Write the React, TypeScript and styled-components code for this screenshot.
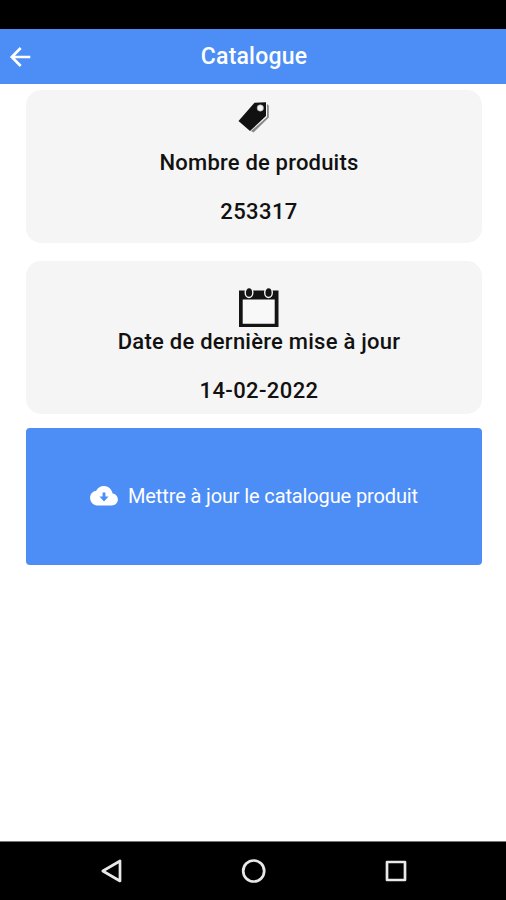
import React from 'react';
import styled, { createGlobalStyle } from 'styled-components';

const GlobalStyle = createGlobalStyle`
  * { box-sizing: border-box; }
  body { margin: 0; background: #fff; }
  button { font: inherit; border: 0; padding: 0; background: none; cursor: pointer; }
  svg { display: block; flex: none; }
`;

const Screen = styled.div`
  display: flex;
  flex-direction: column;
  width: 506px;
  height: 900px;
  overflow: hidden;
  background: #fff;
  font-family: Roboto, 'Liberation Sans', sans-serif;
`;

const StatusBar = styled.div`
  flex: none;
  height: 29px;
  background: #000;
`;

const Header = styled.header`
  flex: none;
  display: grid;
  grid-template-columns: 40px 1fr 40px;
  align-items: center;
  height: 55px;
  background: #4c8df6;
  color: #fff;
`;

const BackButton = styled.button`
  padding-left: 8px;
  color: #fff;
`;

const Title = styled.h1`
  margin: 0 0 0 2px;
  font-size: 23px;
  line-height: 28px;
  font-weight: 500;
  letter-spacing: 0.2px;
  text-align: center;
`;

const Content = styled.main`
  flex: 1;
  display: flex;
  flex-direction: column;
  padding: 6px 24px 0 26px;
`;

const Card = styled.section<{ $top: number; $gap: number }>`
  display: flex;
  flex-direction: column;
  align-items: center;
  height: 153px;
  margin-bottom: ${(p) => p.$gap}px;
  padding: ${(p) => p.$top}px 0 0 10px;
  border-radius: 15px;
  background: #f5f5f5;
  color: #111;
`;

const CardIcon = styled.div<{ $shift?: number }>`
  margin-right: ${(p) => p.$shift ?? 0}px;
`;

const CardLine = styled.p<{ $top: number; $spacing: number }>`
  margin: ${(p) => p.$top}px 0 0;
  font-size: 22px;
  line-height: 26px;
  font-weight: 500;
  letter-spacing: ${(p) => p.$spacing}px;
  white-space: nowrap;
`;

const UpdateButton = styled.button`
  display: flex;
  align-items: center;
  justify-content: center;
  gap: 10px;
  height: 137px;
  padding-bottom: 2px;
  border-radius: 4px;
  background: #4c8df6;
  color: #fff;
`;

const UpdateLabel = styled.span`
  font-size: 20px;
  line-height: 26px;
  letter-spacing: -0.13px;
  white-space: nowrap;
`;

const NavBar = styled.nav`
  flex: none;
  display: flex;
  justify-content: space-between;
  height: 59px;
  padding: 15px 97px 0 98px;
  border-top: 1px solid #777;
  background: #000;
`;

const BackIcon = () => (
  <svg width="24" height="24" viewBox="0 0 24 24" fill="none" stroke="currentColor" strokeWidth="2.7">
    <path d="M22.3 12H4M12.7 3L3.8 12l8.9 9" />
  </svg>
);

const TagIcon = () => (
  <svg width="32" height="32" viewBox="0 0 32 32">
    <path d="M13 30L29 16V3l1.8 1.6v12L15.5 31.5z" fill="#888" />
    <path d="M.5 20L16.5 1.7 28 1.2V15L12 30z" fill="#111" />
    <circle cx="22.3" cy="7" r="3.2" fill="#f4f4f4" stroke="#999" strokeWidth=".6" />
  </svg>
);

const CalendarIcon = () => (
  <svg width="40" height="40" viewBox="0 0 40 40">
    <path d="M0 3.5H39.5V40H0z" fill="#141414" />
    <path d="M3.7 12.5H35.7V36.7H3.7z" fill="#f8f8f8" />
    <g fill="#141414" stroke="#f5f5f5" strokeWidth="1.4">
      <ellipse cx="10" cy="5.5" rx="3.8" ry="5" />
      <ellipse cx="29.5" cy="5.5" rx="3.8" ry="5" />
    </g>
  </svg>
);

const CloudIcon = () => (
  <svg width="28" height="20" viewBox="0 0 28 20">
    <path
      d="M22.6 7.4C21.8 3.2 18.2 0 14 0 10.6 0 7.6 1.9 6.2 4.8 2.7 5.2.1 8.2.1 11.8c0 4.2 3.1 7.6 7 7.6h14.6c3.4 0 6.2-2.8 6.2-6 0-3.2-2.3-5.8-5.3-6z"
      fill="#fff"
    />
    <path d="M12.6 6.5h2.8v4h3.1L14 15.4l-4.5-4.9h3.1z" fill="#4c8df6" />
  </svg>
);

const NavIcon = ({ children }: { children: React.ReactNode }) => (
  <svg width="26" height="28" viewBox="0 0 26 28" fill="none" stroke="#e8e8e8" strokeWidth="2.7" strokeLinejoin="round">
    {children}
  </svg>
);

export default function App() {
  return (
    <Screen>
      <GlobalStyle />
      <StatusBar />
      <Header>
        <BackButton aria-label="Retour">
          <BackIcon />
        </BackButton>
        <Title>Catalogue</Title>
      </Header>
      <Content>
        <Card $top={11} $gap={18}>
          <CardIcon $shift={10}>
            <TagIcon />
          </CardIcon>
          <CardLine $top={17} $spacing={0.2}>Nombre de produits</CardLine>
          <CardLine $top={23} $spacing={0.4}>253317</CardLine>
        </Card>
        <Card $top={26} $gap={14}>
          <CardIcon>
            <CalendarIcon />
          </CardIcon>
          <CardLine $top={2} $spacing={0.25}>Date de dernière mise à jour</CardLine>
          <CardLine $top={23} $spacing={0.4}>14-02-2022</CardLine>
        </Card>
        <UpdateButton>
          <CloudIcon />
          <UpdateLabel>Mettre à jour le catalogue produit</UpdateLabel>
        </UpdateButton>
      </Content>
      <NavBar>
        <NavIcon>
          <path d="M4.8 14L22 4v20z" />
        </NavIcon>
        <NavIcon>
          <circle cx="12.7" cy="14" r="10.5" />
        </NavIcon>
        <NavIcon>
          <rect x="4" y="5" width="18" height="18" />
        </NavIcon>
      </NavBar>
    </Screen>
  );
}
